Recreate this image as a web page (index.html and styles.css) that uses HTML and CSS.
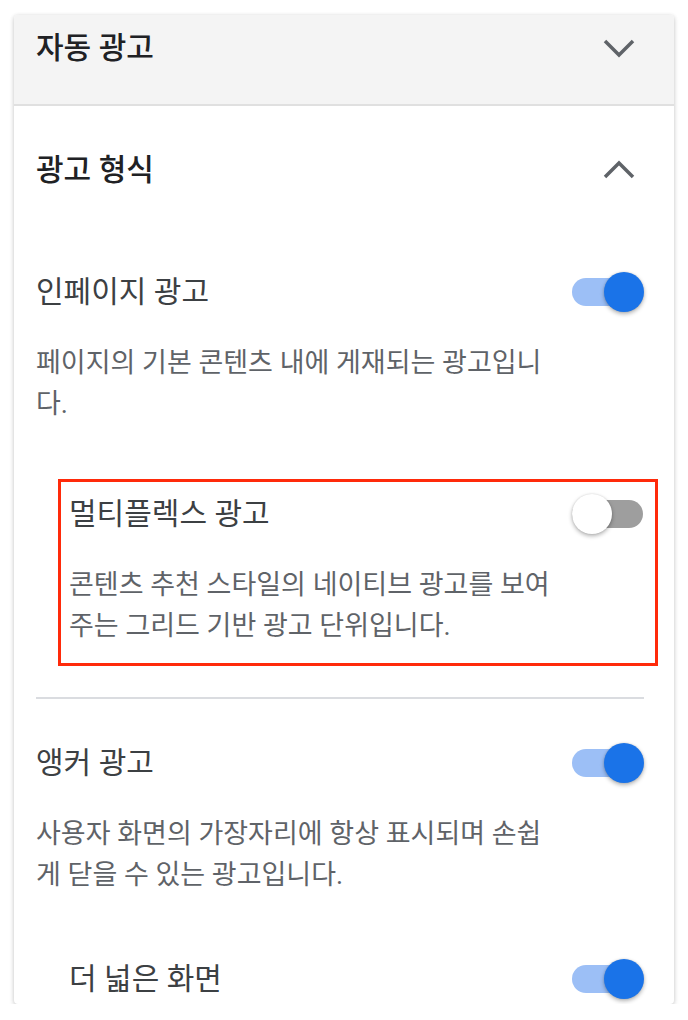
FILE: index.html
```html
<!DOCTYPE html>
<html lang="ko">
<head>
    <meta charset="UTF-8">
    <meta name="viewport" content="width=device-width, initial-scale=1.0">
    <title>광고 설정</title>
    <link rel="stylesheet" href="styles.css">
</head>
<body>
    <div class="card">
        <div class="card-header">
            <span class="card-title">자동 광고</span>
            <svg class="chevron" width="34" height="20" viewBox="0 0 34 20">
                <path d="M3 3 L17 17 L31 3" fill="none" stroke="#5f6368" stroke-width="3.5"/>
            </svg>
        </div>

        <div class="section">
            <div class="section-head">
                <span class="card-title">광고 형식</span>
                <svg class="chevron" width="34" height="20" viewBox="0 0 34 20">
                    <path d="M3 17 L17 3 L31 17" fill="none" stroke="#5f6368" stroke-width="3.5"/>
                </svg>
            </div>

            <div class="setting">
                <div class="setting-row">
                    <span class="setting-title">인페이지 광고</span>
                    <span class="toggle on"><span class="track"></span><span class="knob"></span></span>
                </div>
                <p class="setting-desc">페이지의 기본 콘텐츠 내에 게재되는 광고입니다.</p>
            </div>

            <div class="setting nested highlight">
                <div class="setting-row">
                    <span class="setting-title">멀티플렉스 광고</span>
                    <span class="toggle"><span class="track"></span><span class="knob"></span></span>
                </div>
                <p class="setting-desc">콘텐츠 추천 스타일의 네이티브 광고를 보여주는 그리드 기반 광고 단위입니다.</p>
            </div>

            <div class="divider"></div>

            <div class="setting anchor">
                <div class="setting-row">
                    <span class="setting-title">앵커 광고</span>
                    <span class="toggle on"><span class="track"></span><span class="knob"></span></span>
                </div>
                <p class="setting-desc">사용자 화면의 가장자리에 항상 표시되며 손쉽게 닫을 수 있는 광고입니다.</p>
            </div>

            <div class="setting nested wide">
                <div class="setting-row">
                    <span class="setting-title">더 넓은 화면</span>
                    <span class="toggle on"><span class="track"></span><span class="knob"></span></span>
                </div>
            </div>
        </div>
    </div>
</body>
</html>
```

FILE: styles.css
```css
body {
    margin: 0;
    background-color: #fff;
    font-family: Roboto, "Noto Sans CJK KR", sans-serif;
}

.card {
    margin: 15px 14px 0 14px;
    height: 989px;
    overflow: hidden;
    background: #fff;
    border-radius: 4px;
    box-shadow: 0 1px 4px rgba(0, 0, 0, 0.18), 0 2px 6px rgba(0, 0, 0, 0.08);
}

.card-header {
    display: flex;
    align-items: center;
    justify-content: space-between;
    height: 40px;
    padding: 13px 38px 36px 22px;
    background: #f4f4f4;
    border-bottom: 2px solid #e0e0e0;
}

.card-title {
    font-size: 30px;
    font-weight: 500;
    color: #202124;
    line-height: 40px;
}

.chevron {
    display: block;
}

.section {
    padding: 0 30px 0 22px;
}

.section-head {
    display: flex;
    align-items: center;
    justify-content: space-between;
    height: 40px;
    margin-top: 44px;
    padding-right: 8px;
}

.setting {
    position: relative;
    margin-top: 82px;
}

.setting.nested {
    padding-left: 33px;
}

.setting.highlight {
    margin-top: 69px;
}

.setting.highlight::after {
    content: "";
    position: absolute;
    top: -15px;
    bottom: -19px;
    left: 22px;
    right: -14px;
    border: 3px solid #ff2a0a;
    pointer-events: none;
}

.setting.anchor {
    margin-top: 44px;
}

.setting.wide {
    margin-top: 63px;
}

.setting-row {
    display: flex;
    align-items: center;
    justify-content: space-between;
    height: 40px;
}

.setting-title {
    font-size: 30px;
    color: #3c4043;
    line-height: 40px;
}

.setting-desc {
    margin: 31px 0 0 0;
    padding-right: 88px;
    font-size: 27px;
    line-height: 41px;
    color: #5f6368;
}

.divider {
    height: 2px;
    margin-top: 50px;
    background: #dadce0;
}

.toggle {
    position: relative;
    width: 72px;
    height: 40px;
    flex-shrink: 0;
}

.toggle .track {
    position: absolute;
    top: 6px;
    left: 0;
    right: 1px;
    height: 28px;
    border-radius: 14px;
    background: #9e9e9e;
}

.toggle .knob {
    position: absolute;
    top: 0;
    left: 0;
    width: 40px;
    height: 40px;
    border-radius: 50%;
    background: #fff;
    box-shadow: 0 2px 4px rgba(0, 0, 0, 0.3), 0 0 2px rgba(0, 0, 0, 0.12);
}

.toggle.on .track {
    background: #9cbff6;
}

.toggle.on .knob {
    left: auto;
    right: 0;
    background: #1a73e8;
}
```
